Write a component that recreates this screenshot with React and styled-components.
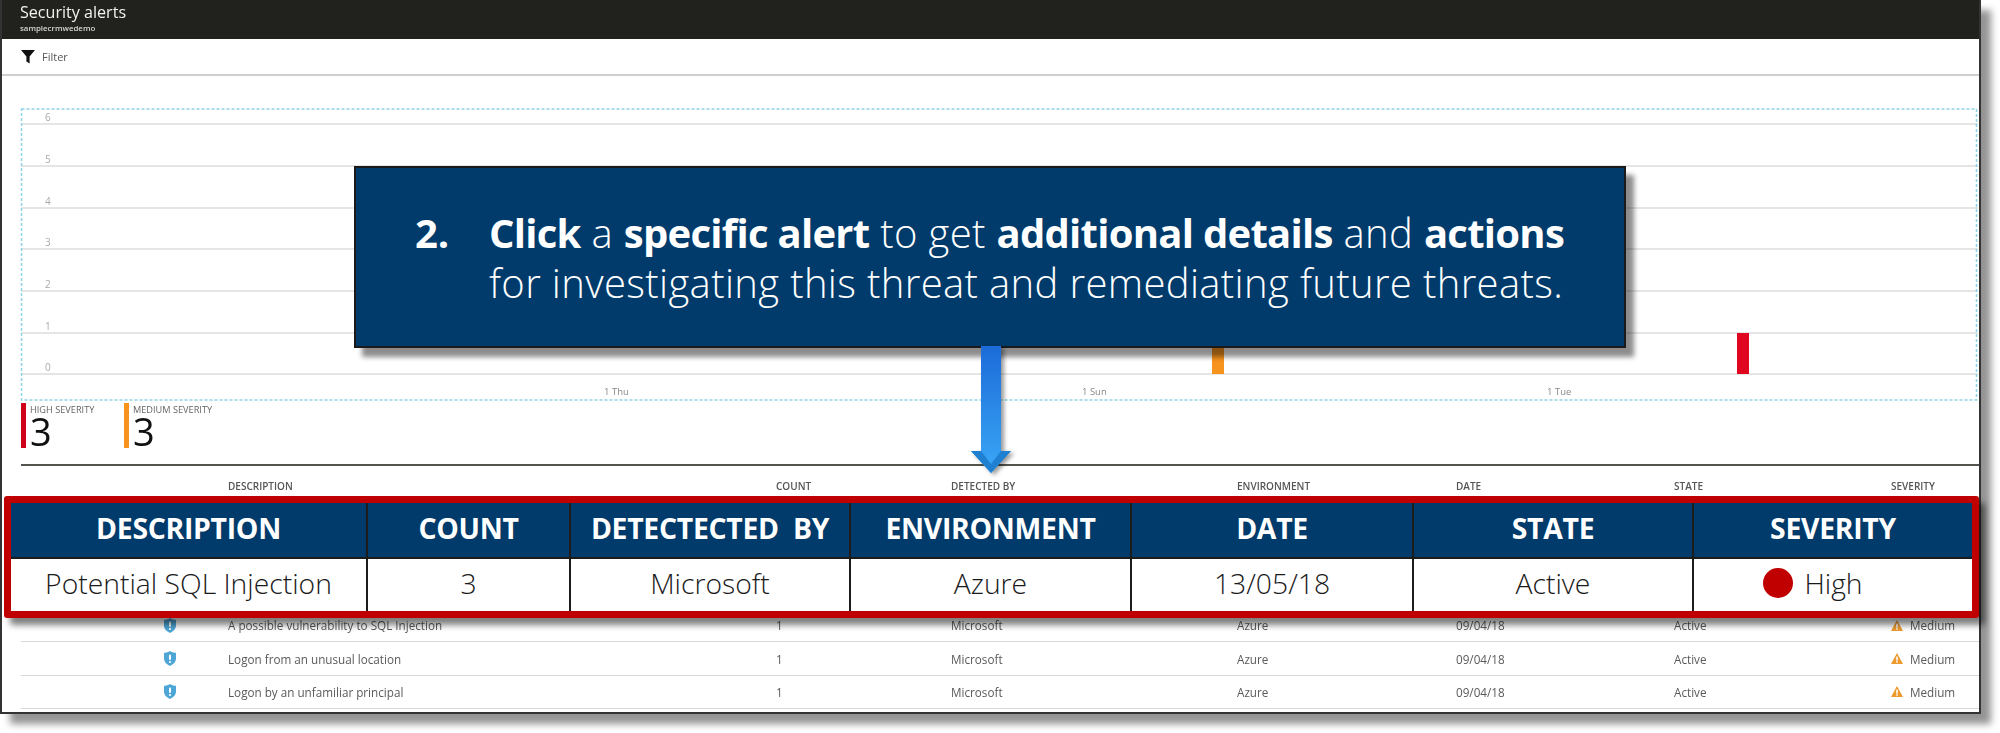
import React from 'react';
import styled, { createGlobalStyle, css } from 'styled-components';

const GlobalStyle = createGlobalStyle`
    html, body {
        margin: 0;
        padding: 0;
        background: #fff;
    }
    body {
        font-family: "Open Sans", "Noto Sans", sans-serif;
    }
`;

const gridYs = [124, 166, 208, 249, 291, 333, 374];
const lowRows = ['A possible vulnerability to SQL Injection', 'Logon from an unusual location', 'Logon by an unfamiliar principal'];
const headCols = ['DESCRIPTION', 'COUNT', 'DETECTED BY', 'ENVIRONMENT', 'DATE', 'STATE', 'SEVERITY'];
const bigHead = ['DESCRIPTION', 'COUNT', 'DETECTECTED  BY', 'ENVIRONMENT', 'DATE', 'STATE', 'SEVERITY'];
const bigRow = ['Potential SQL Injection', '3', 'Microsoft', 'Azure', '13/05/18', 'Active'];

function FunnelIcon() {
    return (
        <svg width="14" height="15" viewBox="0 0 14 15">
            <path d="M0 1h14L8.6 7.4V14.4L5.4 12.4V7.4z" fill="#111" />
        </svg>
    );
}

function ShieldIcon() {
    return (
        <svg width="12" height="15" viewBox="0 0 12 15">
            <path d="M6 0C7.6 1.2 9.8 1.8 12 1.8V7.6C12 11 9.4 13.4 6 15 2.6 13.4 0 11 0 7.6V1.8C2.2 1.8 4.4 1.2 6 0z" fill="#4da6d6" />
            <rect x="5" y="3.4" width="2" height="5.6" rx="1" fill="#fff" />
            <circle cx="6" cy="11" r="1.1" fill="#fff" />
        </svg>
    );
}

function WarnIcon() {
    return (
        <svg width="12" height="11" viewBox="0 0 12 11">
            <path d="M6 0L12 11H0z" fill="#ec9a2e" />
            <rect x="5.2" y="3.6" width="1.6" height="4" fill="#fff" />
            <rect x="5.2" y="8.2" width="1.6" height="1.5" fill="#fff" />
        </svg>
    );
}

function AlertChart() {
    return (
        <ChartSvg viewBox="0 0 1976 303" width="1976" height="303">
            {gridYs.map((y, i) => (
                <g key={y}>
                    <line x1="19" x2="1976" y1={y - 100} y2={y - 100} stroke="#dcdcdc" strokeWidth="1.5" />
                    <text x="43" y={y - 103} fontSize="10" fill="#aaa">{6 - i}</text>
                </g>
            ))}
            <rect x="19.5" y="9" width="1955" height="291" fill="none" stroke="#8ed3e6" strokeWidth="1.5" strokeDasharray="3 2" />
            <rect x="1210" y="240" width="12" height="34" fill="#f7941d" />
            <rect x="1735" y="233" width="12" height="41" fill="#e1061f" />
            <text x="602" y="295" fontSize="9.5" fill="#888">1 Thu</text>
            <text x="1080" y="295" fontSize="9.5" fill="#888">1 Sun</text>
            <text x="1545" y="295" fontSize="9.5" fill="#888">1 Tue</text>
        </ChartSvg>
    );
}

function App() {
    return (
        <>
            <GlobalStyle />
            <Page>
                <Blade>
                    <Titlebar>
                        <Title>Security alerts</Title>
                        <Subtitle>samplecrmwedemo</Subtitle>
                    </Titlebar>
                    <FilterBar>
                        <FunnelIcon />
                        <span>Filter</span>
                    </FilterBar>
                    <AlertChart />
                    <Legend>
                        <LegendItem $color="#d0021b">
                            <small>HIGH SEVERITY</small>
                            <b>3</b>
                        </LegendItem>
                        <LegendItem $color="#f7941d">
                            <small>MEDIUM SEVERITY</small>
                            <b>3</b>
                        </LegendItem>
                    </Legend>
                    <ListHead>
                        <span />
                        {headCols.map((c) => <span key={c}>{c}</span>)}
                    </ListHead>
                    <ListBody>
                        {lowRows.map((r) => (
                            <ListRow key={r}>
                                <IconCell><ShieldIcon /></IconCell>
                                <span>{r}</span>
                                <span>1</span>
                                <span>Microsoft</span>
                                <span>Azure</span>
                                <span>09/04/18</span>
                                <span>Active</span>
                                <SeverityCell><WarnIcon />Medium</SeverityCell>
                            </ListRow>
                        ))}
                    </ListBody>

                    <Callout>
                        <CalloutNum>2.</CalloutNum>
                        <CalloutText>
                            <strong>Click</strong> a <strong>specific alert</strong> to get <strong>additional details</strong> and <strong>actions</strong>
                            <br />
                            for investigating this threat and remediating future threats.
                        </CalloutText>
                    </Callout>

                    <Arrow viewBox="0 0 42 128" width="42" height="128">
                        <defs>
                            <linearGradient id="shaft" x1="0" y1="0" x2="0" y2="1">
                                <stop offset="0" stopColor="#1c6bd8" />
                                <stop offset="1" stopColor="#3aa8f6" />
                            </linearGradient>
                        </defs>
                        <path d="M11 0H31V105H41L21 127 1 105H11z" fill="url(#shaft)" />
                        <path d="M1 105H11L21 118 31 105H41L21 127z" fill="#1f7fd0" />
                    </Arrow>

                    <BigTable>
                        {bigHead.map((c) => <BigHead key={c}>{c}</BigHead>)}
                        {bigRow.map((c) => <BigCell key={c}>{c}</BigCell>)}
                        <SeverityBigCell><Dot />High</SeverityBigCell>
                    </BigTable>
                </Blade>
            </Page>
        </>
    );
}

export default App;

const soft = css`
    filter: blur(0.35px);
`;

const Page = styled.div`
    width: 2000px;
    height: 733px;
    overflow: hidden;
    background: #fff;
`;

const Blade = styled.div`
    position: relative;
    box-sizing: border-box;
    width: 1981px;
    height: 714px;
    background: #fff;
    border: 2px solid #333;
    border-top: none;
    box-shadow: 10px 10px 7px rgba(0, 0, 0, 0.42);
`;

const Titlebar = styled.div`
    box-sizing: border-box;
    height: 39px;
    padding: 1px 0 0 18px;
    background: #21211d;
    color: #fff;
`;

const Title = styled.div`
    ${soft}
    font-size: 16.1px;
    line-height: 22px;
    color: #f2f2f2;
`;

const Subtitle = styled.div`
    ${soft}
    font-size: 7.9px;
    line-height: 11px;
    font-weight: 600;
    color: #d6d6d6;
`;

const FilterBar = styled.div`
    ${soft}
    box-sizing: border-box;
    display: flex;
    align-items: center;
    gap: 7px;
    height: 37px;
    padding-left: 19px;
    border-bottom: 2px solid #cfcfcf;
    font-size: 11px;
    color: #555;
`;

const ChartSvg = styled.svg`
    ${soft}
    display: block;
    margin-top: 24px;
    font-family: "Open Sans", sans-serif;
`;

const Legend = styled.div`
    ${soft}
    box-sizing: border-box;
    display: flex;
    margin-left: 19px;
    height: 63px;
    border-bottom: 2px solid #55534e;
`;

const LegendItem = styled.div`
    box-sizing: border-box;
    display: flex;
    flex-direction: column;
    width: 103px;
    height: 45px;
    padding-left: 4px;
    border-left: 5px solid ${(p) => p.$color};

    small {
        font-size: 9.2px;
        line-height: 10px;
        margin-top: 2px;
        color: #666;
        white-space: nowrap;
    }

    b {
        font-size: 38px;
        line-height: 33px;
        font-weight: 400;
        color: #111;
    }
`;

const ListHead = styled.div`
    ${soft}
    display: grid;
    grid-template-columns: 207px 548px 175px 286px 219px 218px 217px 1fr;
    margin-left: 19px;
    padding-top: 14px;
    font-size: 10px;
    line-height: 12px;
    font-weight: 600;
    color: #555;
`;

const ListBody = styled.div`
    margin: 117px 0 0 19px;
`;

const ListRow = styled.div`
    ${soft}
    box-sizing: border-box;
    display: grid;
    grid-template-columns: 207px 548px 175px 286px 219px 218px 217px 1fr;
    align-items: center;
    height: 33.4px;
    border-bottom: 1.5px solid #d9d9d9;
    font-size: 11.7px;
    color: #5a5a5a;
`;

const IconCell = styled.span`
    display: flex;
    justify-content: flex-end;
    padding-right: 52px;
`;

const SeverityCell = styled.span`
    display: flex;
    align-items: center;
    gap: 7px;
`;

const Callout = styled.div`
    position: absolute;
    left: 352px;
    top: 166px;
    box-sizing: border-box;
    display: flex;
    width: 1272px;
    height: 182px;
    padding-top: 40px;
    padding-left: 59px;
    background: #003b6b;
    border: 2px solid #1a1a1a;
    box-shadow: 8px 9px 5px rgba(0, 0, 0, 0.45);
    color: #fff;
    font-size: 40px;
    line-height: 50px;
    font-weight: 300;
`;

const CalloutNum = styled.div`
    width: 74px;
    font-weight: 700;
`;

const CalloutText = styled.div`
    white-space: nowrap;
    letter-spacing: 0.36px;

    strong {
        font-weight: 700;
        letter-spacing: -0.72px;
    }
`;

const Arrow = styled.svg`
    position: absolute;
    left: 968px;
    top: 346px;
    filter: drop-shadow(3px 2px 2px rgba(0, 0, 0, 0.4));
`;

const BigTable = styled.div`
    position: absolute;
    left: 2px;
    top: 496px;
    box-sizing: border-box;
    display: grid;
    grid-template-columns: 355px 203px 280px 281px 282px 280px 280px;
    grid-template-rows: 56px 52px;
    width: 1975px;
    height: 122px;
    border: 7px solid #c00000;
    border-radius: 3px;
    background: #fff;
    box-shadow: 6px 7px 6px rgba(0, 0, 0, 0.5);
`;

const BigHead = styled.div`
    box-sizing: border-box;
    display: flex;
    align-items: center;
    justify-content: center;
    padding-bottom: 5px;
    white-space: pre;
    background: #003b6b;
    border-left: 2px solid #1c1c1c;
    border-bottom: 2px solid #1c1c1c;
    color: #fff;
    font-size: 28.4px;
    font-weight: 700;
    letter-spacing: -0.3px;

    &:first-child {
        border-left: none;
    }
`;

const BigCell = styled.div`
    box-sizing: border-box;
    display: flex;
    align-items: center;
    justify-content: center;
    padding-bottom: 5px;
    border-left: 2px solid #1c1c1c;
    color: #1a1a1a;
    font-size: 28.3px;
    font-weight: 300;

    &:nth-child(8) {
        border-left: none;
    }
`;

const SeverityBigCell = styled(BigCell)`
    padding-right: 40px;
`;

const Dot = styled.span`
    width: 30px;
    height: 30px;
    margin-right: 11px;
    border-radius: 50%;
    background: #c00000;
`;
